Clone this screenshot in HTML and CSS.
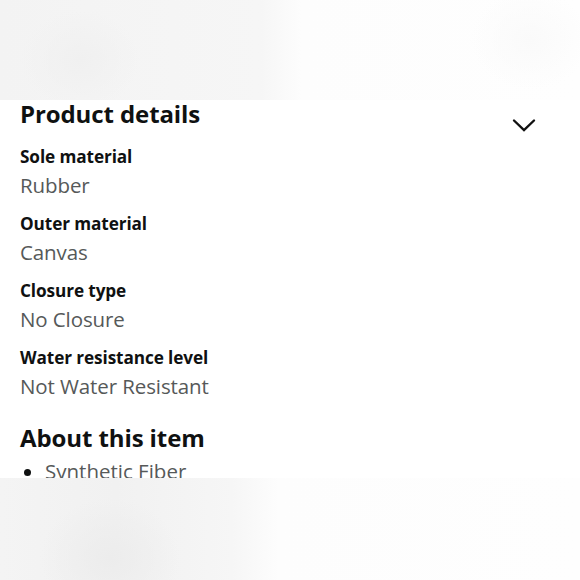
FILE: index.html
```html
<!DOCTYPE html>
<html lang="en">
<head>
<meta charset="utf-8">
<title>Product details</title>
<link rel="stylesheet" href="styles.css">
</head>
<body>
<div class="page">
  <div class="blur blur-top"></div>
  <main class="content">
    <section class="details">
      <div class="details-head">
        <h2 class="heading">Product details</h2>
        <svg class="chevron" width="26" height="16" viewBox="0 0 26 16" aria-hidden="true">
          <path d="M3 3.5 L13 13 L23 3.5" fill="none" stroke="#111" stroke-width="2.4" stroke-linecap="round" stroke-linejoin="miter"/>
        </svg>
      </div>
      <dl class="specs">
        <div class="spec"><dt>Sole material</dt><dd>Rubber</dd></div>
        <div class="spec"><dt>Outer material</dt><dd>Canvas</dd></div>
        <div class="spec"><dt>Closure type</dt><dd>No Closure</dd></div>
        <div class="spec"><dt>Water resistance level</dt><dd>Not Water Resistant</dd></div>
      </dl>
    </section>
    <section class="about">
      <h2 class="heading">About this item</h2>
      <ul class="bullets">
        <li>Synthetic Fiber</li>
      </ul>
    </section>
  </main>
  <div class="blur blur-bottom"></div>
</div>
</body>
</html>
```
FILE: styles.css
```css
* { box-sizing: border-box; }
html, body { margin: 0; padding: 0; background: #fff; }
body { font-family: "Open Sans", "Noto Sans", sans-serif; color: #0f1111; }
.page { position: relative; width: 580px; height: 580px; overflow: hidden; background: #fff; }
.content { padding: 98px 20px 0 20px; }
.details-head { display: flex; justify-content: space-between; align-items: flex-start; }
.heading { margin: 0; font-size: 24px; font-weight: 700; line-height: 32px; letter-spacing: -0.1px; }
.chevron { margin: 19px 23px 0 0; }
.specs { margin: 12px 0 0 0; }
.spec { margin: 0 0 11px 0; }
.spec dt { font-size: 17.2px; font-weight: 700; line-height: 24px; letter-spacing: -0.1px; }
.spec dd { margin: 0; font-size: 20.5px; line-height: 32px; color: #565959; letter-spacing: -0.1px; }
.about { margin-top: 20px; }
.bullets { margin: 2px 0 0 0; padding-left: 25px; font-size: 20.5px; line-height: 30px; color: #565959; }
.bullets li::marker { color: #0f1111; }
.blur { position: absolute; left: 0; right: 0; }
.blur-top { top: 0; height: 100px;
  background:
    radial-gradient(ellipse 60px 50px at 80px 60px, #f0f0f0, rgba(240,240,240,0)),
    radial-gradient(ellipse 60px 50px at 530px 40px, #fafafa, rgba(250,250,250,0)),
    linear-gradient(to right, #f3f3f3 0%, #f6f6f6 45%, #fdfdfd 52%, #fefefe 100%); }
.blur-bottom { top: 478px; bottom: 0;
  background:
    radial-gradient(ellipse 70px 60px at 110px 80px, #ececec, rgba(236,236,236,0)),
    linear-gradient(to right, #f4f4f4 0%, #f1f1f1 20%, #f6f6f6 40%, #fdfdfd 48%, #fefefe 100%); }
```
